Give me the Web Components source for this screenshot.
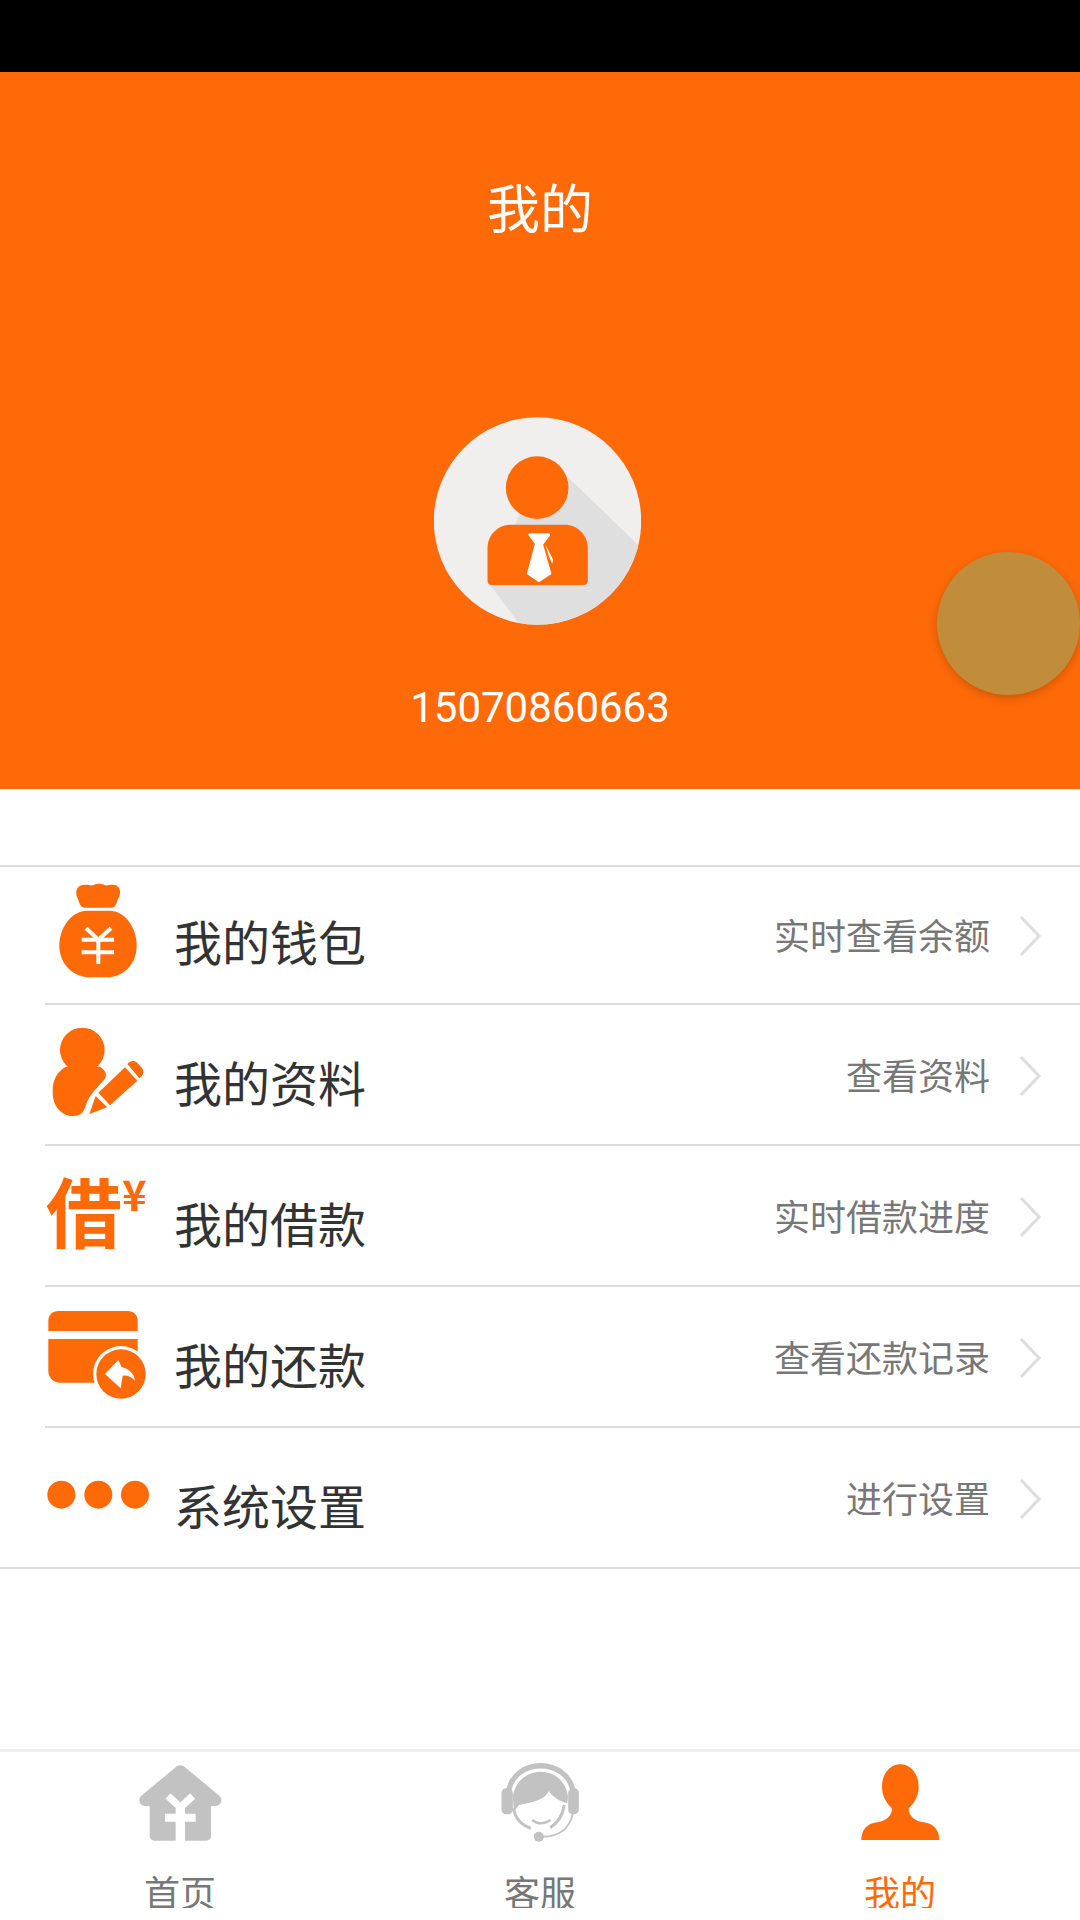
<!DOCTYPE html>
<html lang="zh">
<head>
<meta charset="utf-8">
<title>我的</title>
<style>
  html, body { margin: 0; padding: 0; background: #fff; }
  body { width: 1080px; height: 1920px; overflow: hidden; font-family: "Noto Sans CJK SC", "Noto Sans", sans-serif; }
</style>
</head>
<body>
<app-shell>
  <profile-header title-text="我的" phone="15070860663"></profile-header>
  <menu-list>
    <menu-row kind="first" label="我的钱包" hint="实时查看余额">
      <svg slot="icon" viewBox="45 42 315 315" fill="#ff6a08">
        <path d="M150 50c15-6 30 1 40-1 10-6 25-6 35 0 10 2 25-5 35 1 14 8 12 26 4 40-4 12-7 26-20 26h-80c-13 0-16-14-20-26-8-14-8-32 6-40z"/>
        <path d="M170 125h70c40 0 80 45 80 105 0 55-40 95-90 95h-50c-50 0-92-40-92-95 0-60 42-105 82-105z"/>
        <path d="M168 178l37 34 38-34M155 212h97M155 250h97M205 212v73" fill="none" stroke="#fff" stroke-width="12"/>
      </svg>
    </menu-row>
    <menu-row label="我的资料" hint="查看资料">
      <svg slot="icon" viewBox="45 456 315 315" fill="#ff6a08">
        <circle cx="157" cy="540" r="67"/>
        <path d="M108 590C80 605 68 630 68 665c0 45 27 73 62 73 20 0 30-8 38-33 7-25 27-45 54-75 13-15 3-30-12-40z"/>
        <path d="M178 732l19-54 35 34z"/>
        <path d="M205 668l80-76 37 40-82 74z"/>
        <path d="M292 582c8-10 20-12 28-5l14 15c8 8 8 20 0 28l-6 5z"/>
      </svg>
    </menu-row>
    <menu-row label="我的借款" hint="实时借款进度">
      <jie-icon slot="icon"></jie-icon>
    </menu-row>
    <menu-row label="我的还款" hint="查看还款记录">
      <svg slot="icon" viewBox="45 432 315 315" fill="#ff6a08">
        <path d="M55 513v-30c0-18 12-30 30-30h208c18 0 30 12 30 30v30z"/>
        <path d="M55 537h268v90H220v41h-130c-20 0-35-15-35-35z"/>
        <circle cx="273" cy="642" r="84" fill="#fff"/>
        <circle cx="273" cy="642" r="74"/>
        <path d="M225 642l40-42 10 22c20 3 37 18 40 40-13-14-25-17-37-15l-6 38z" fill="#fff"/>
      </svg>
    </menu-row>
    <menu-row kind="last" label="系统设置" hint="进行设置">
      <svg slot="icon" viewBox="45 855 315 315" fill="#ff6a08">
        <circle cx="94" cy="1004" r="42"/>
        <circle cx="205" cy="1004" r="42"/>
        <circle cx="315" cy="1004" r="42"/>
      </svg>
    </menu-row>
  </menu-list>
  <tab-bar>
    <tab-item label="首页">
      <svg slot="icon" viewBox="83 90 315 270" fill="#c2c2c2">
        <path d="M228 110c7-6 17-6 24 0l106 88c10 10 4 30-12 30h-14v90c0 8-6 14-14 14H162c-8 0-14-6-14-14v-90h-14c-16 0-22-20-12-30z"/>
        <path d="M203 198l37 34 37-34" fill="none" stroke="#fff" stroke-width="22"/>
        <path d="M194 251h92v24h-32v60h-28v-60h-32zM226 232h28v20h-28z" fill="#fff"/>
      </svg>
    </tab-item>
    <tab-item label="客服">
      <svg slot="icon" viewBox="-22.5 15 315 270" fill="#c2c2c2">
        <path d="M40 105C60 8 210 8 232 105" fill="none" stroke="#c2c2c2" stroke-width="16"/>
        <rect x="18" y="100" width="34" height="78" rx="14"/>
        <rect x="218" y="100" width="32" height="78" rx="14"/>
        <path d="M52 125C60 70 105 50 135 50c40 0 75 25 83 75l-3 20c-20-5-45-20-55-37-10 27-60 37-90 42l-15 20z"/>
        <path d="M54 160c6 34 28 52 52 60M206 150c-4 32-20 54-42 68" fill="none" stroke="#c2c2c2" stroke-width="9"/>
        <path d="M110 195q25 20 55 0" fill="none" stroke="#c2c2c2" stroke-width="7"/>
        <path d="M232 175c-10 50-47 70-92 70" fill="none" stroke="#c2c2c2" stroke-width="6"/>
        <circle cx="130" cy="245" r="15"/>
      </svg>
    </tab-item>
    <tab-item label="我的" active>
      <svg slot="icon" viewBox="743 90 315 270" fill="#ff6a08">
        <path d="M783 330c0-30 17-50 47-53 25-3 45-17 45-42-20-20-30-40-30-65 0-40 25-67 55-67s55 27 55 67c0 25-10 45-30 65 0 25 20 39 45 42 30 3 47 23 47 53z"/>
      </svg>
    </tab-item>
  </tab-bar>
</app-shell>

<script>
class AppShell extends HTMLElement {
  constructor() {
    super();
    this.attachShadow({ mode: 'open' }).innerHTML = `
      <style>
        :host { display: flex; flex-direction: column; width: 1080px; height: 1920px; background: #fff; }
        .status { height: 72px; background: #000; flex: none; }
        .grow { display: flex; flex-direction: column; flex: 1; }
      </style>
      <div class="status"></div>
      <div class="grow"><slot></slot></div>
    `;
  }
}

class ProfileHeader extends HTMLElement {
  constructor() {
    super();
    this.attachShadow({ mode: 'open' });
  }

  connectedCallback() {
    this.shadowRoot.innerHTML = `
      <style>
        :host { display: flex; flex-direction: column; align-items: center; height: 717px; background: #ff6a08; color: #fff; position: relative; flex: none; }
        .title { margin-top: 104px; font: 400 53px/60px "Noto Sans CJK SC", sans-serif; }
        .avatar { display: block; width: 207px; height: 208px; margin: 181px 5px 0 0; }
        .phone { margin-top: 58px; font: 400 42px/50px Roboto, sans-serif; }
        .float { position: absolute; right: 0; top: 480px; width: 143px; height: 143px; border-radius: 50%; background: #c18d3a; box-shadow: 0 3px 10px rgba(0,0,0,.2); }
      </style>
      <div class="title">${this.getAttribute('title-text')}</div>
      <svg class="avatar" viewBox="103 82 620 624">
        <defs><clipPath id="c"><circle cx="413" cy="394" r="311"/></clipPath></defs>
        <circle cx="413" cy="394" r="311" fill="#f0efee"/>
        <path clip-path="url(#c)" d="M497 255l320 310v300H480L268 582l90-205z" fill="#dfdfdf"/>
        <circle cx="412" cy="294" r="94" fill="#ff6a08"/>
        <path d="M333 405h161c40 0 70 32 70 70v98c0 8-5 13-13 13H276c-8 0-13-5-13-13v-98c0-38 30-70 70-70z" fill="#ff6a08"/>
        <path d="M389 431h57c4 0 6 4 4 7l-20 27 25 88-38 25-36-25 24-91-19-25c-2-3 0-6 3-6z" fill="#fff"/>
        <path d="M437 465l23 45-3 12-10-22z" fill="#fff"/>
      </svg>
      <div class="phone">${this.getAttribute('phone')}</div>
      <div class="float"></div>
    `;
  }
}

class MenuList extends HTMLElement {
  constructor() {
    super();
    this.attachShadow({ mode: 'open' }).innerHTML = `
      <style>
        :host { display: block; margin-top: 76px; flex: none; }
      </style>
      <slot></slot>
    `;
  }
}

class MenuRow extends HTMLElement {
  constructor() {
    super();
    this.attachShadow({ mode: 'open' });
  }

  connectedCallback() {
    const kind = this.getAttribute('kind') || '';
    this.shadowRoot.innerHTML = `
      <style>
        :host { display: block; }
        :host([kind="last"]) { border-bottom: 2px solid #dcdcdc; }
        .row { display: flex; align-items: center; box-sizing: border-box; height: 141px; margin-left: 45px; border-top: 2px solid #dcdcdc; }
        .row.first { height: 138px; margin-left: 0; padding-left: 45px; }
        .icon { width: 105px; height: 105px; flex: none; }
        ::slotted(svg) { display: block; width: 105px; height: 105px; }
        .label { margin: 12px 0 0 24px; font: 400 48px/60px "Noto Sans CJK SC", sans-serif; color: #333; flex: 1; }
        .hint { margin-top: -1px; font: 400 36px/44px "Noto Sans CJK SC", sans-serif; color: #777; }
        .chev { display: block; width: 24px; height: 42px; margin: 3px 38px 0 28px; flex: none; }
        .first .label { margin-top: 9px; }
        .first .hint { margin-top: -3px; }
        .first .chev { margin-top: 1px; }
      </style>
      <div class="row ${kind}">
        <div class="icon"><slot name="icon"></slot></div>
        <div class="label">${this.getAttribute('label')}</div>
        <div class="hint">${this.getAttribute('hint')}</div>
        <svg class="chev" viewBox="0 0 24 42"><path d="M3 2l18 19L3 40" fill="none" stroke="#ddd" stroke-width="3"/></svg>
      </div>
    `;
  }
}

class JieIcon extends HTMLElement {
  constructor() {
    super();
    this.attachShadow({ mode: 'open' }).innerHTML = `
      <style>
        :host { display: flex; width: 105px; height: 105px; color: #ff6a08; font-family: "Noto Sans CJK SC", sans-serif; font-weight: 700; }
        .big { font-size: 76px; line-height: 92px; margin-left: 1px; flex: none; }
        .small { font-size: 42px; line-height: 60px; flex: none; }
      </style>
      <span class="big">借</span><span class="small">¥</span>
    `;
  }
}

class TabBar extends HTMLElement {
  constructor() {
    super();
    this.attachShadow({ mode: 'open' }).innerHTML = `
      <style>
        :host { display: flex; box-sizing: border-box; height: 171px; margin-top: auto; border-top: 3px solid #eee; flex: none; }
      </style>
      <slot></slot>
    `;
  }
}

class TabItem extends HTMLElement {
  constructor() {
    super();
    this.attachShadow({ mode: 'open' });
  }

  connectedCallback() {
    const color = this.hasAttribute('active') ? '#ff6a08' : '#777';
    this.shadowRoot.innerHTML = `
      <style>
        :host { display: flex; flex: 1; flex-direction: column; align-items: center; padding-top: 8px; }
        ::slotted(svg) { display: block; width: 105px; height: 90px; }
        .label { margin-top: 21px; height: 37px; overflow: hidden; font: 400 36px/40px "Noto Sans CJK SC", sans-serif; color: ${color}; }
      </style>
      <slot name="icon"></slot>
      <div class="label">${this.getAttribute('label')}</div>
    `;
  }
}

customElements.define('app-shell', AppShell);
customElements.define('profile-header', ProfileHeader);
customElements.define('menu-list', MenuList);
customElements.define('menu-row', MenuRow);
customElements.define('jie-icon', JieIcon);
customElements.define('tab-bar', TabBar);
customElements.define('tab-item', TabItem);
</script>
</body>
</html>
